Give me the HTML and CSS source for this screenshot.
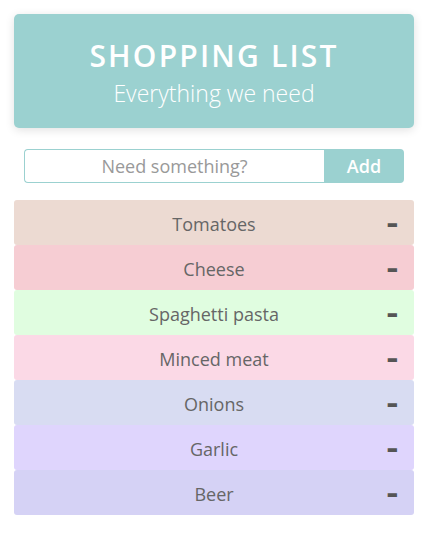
FILE: index.html
```html
<!DOCTYPE html>
<html>
<head>
<meta charset="utf-8">
<link rel="stylesheet" href="styles.css">
</head>
<body>
<div class="app">
  <header class="hero">
    <h1 class="title">SHOPPING LIST</h1>
    <p class="subtitle">Everything we need</p>
  </header>
  <form class="add-form">
    <input class="add-input" type="text" placeholder="Need something?">
    <button class="add-btn" type="button">Add</button>
  </form>
  <ul class="list">
    <li class="item c1"><span class="name">Tomatoes</span><span class="remove">-</span></li>
    <li class="item c2"><span class="name">Cheese</span><span class="remove">-</span></li>
    <li class="item c3"><span class="name">Spaghetti pasta</span><span class="remove">-</span></li>
    <li class="item c4"><span class="name">Minced meat</span><span class="remove">-</span></li>
    <li class="item c5"><span class="name">Onions</span><span class="remove">-</span></li>
    <li class="item c6"><span class="name">Garlic</span><span class="remove">-</span></li>
    <li class="item c7"><span class="name">Beer</span><span class="remove">-</span></li>
  </ul>
</div>
</body>
</html>
```
FILE: styles.css
```css
* { box-sizing: border-box; }
html, body { margin: 0; padding: 0; background: #fff; }
body { font-family: "Open Sans", "Noto Sans", sans-serif; }
.app { width: 426px; padding: 14px 12px 14px 14px; display: flex; flex-direction: column; }
.hero {
  background: #9bd1d0;
  border-radius: 5px;
  box-shadow: 0 2px 10px rgba(0,0,0,0.12);
  height: 114px;
  display: flex;
  flex-direction: column;
  align-items: center;
  justify-content: center;
  color: #fff;
  padding-top: 8px;
}
.title {
  margin: 0;
  font-size: 30px;
  font-weight: 600;
  letter-spacing: 2.2px;
  line-height: 36px;
}
.subtitle {
  margin: 0;
  font-size: 23px;
  font-weight: 300;
  line-height: 38px;
}
.add-form {
  display: flex;
  margin: 21px 10px 17px;
  height: 34px;
}
.add-input {
  flex: 1;
  min-width: 0;
  border: 1px solid #9bd1d0;
  border-right: none;
  border-radius: 4px 0 0 4px;
  font-family: inherit;
  font-size: 18px;
  text-align: center;
  color: #555;
  outline: none;
  padding: 0;
}
.add-input::placeholder { color: #999; }
.add-btn {
  flex: 0 0 80px;
  border: none;
  background: #9bd1d0;
  color: #fff;
  font-family: inherit;
  font-size: 18px;
  font-weight: 600;
  border-radius: 0 4px 4px 0;
  padding: 0;
}
.list { list-style: none; margin: 0; padding: 0; display: flex; flex-direction: column; }
.item {
  height: 45px;
  border-radius: 3px;
  display: flex;
  align-items: center;
  position: relative;
  justify-content: center;
  color: #666;
  font-size: 18px;
  padding-top: 3px;
}
.name { text-align: center; }
.remove {
  position: absolute;
  right: 16px;
  top: 10px;
  font-size: 24px;
  line-height: 26px;
  font-weight: 800;
  color: #555;
  transform: scaleX(1.4);
  transform-origin: right center;
}
.c1 { background: #ecdad2; }
.c2 { background: #f6cdd3; }
.c3 { background: #e0fde0; }
.c4 { background: #fbd9e6; }
.c5 { background: #d8dcf2; }
.c6 { background: #dfd5fd; }
.c7 { background: #d5d2f5; }
```
